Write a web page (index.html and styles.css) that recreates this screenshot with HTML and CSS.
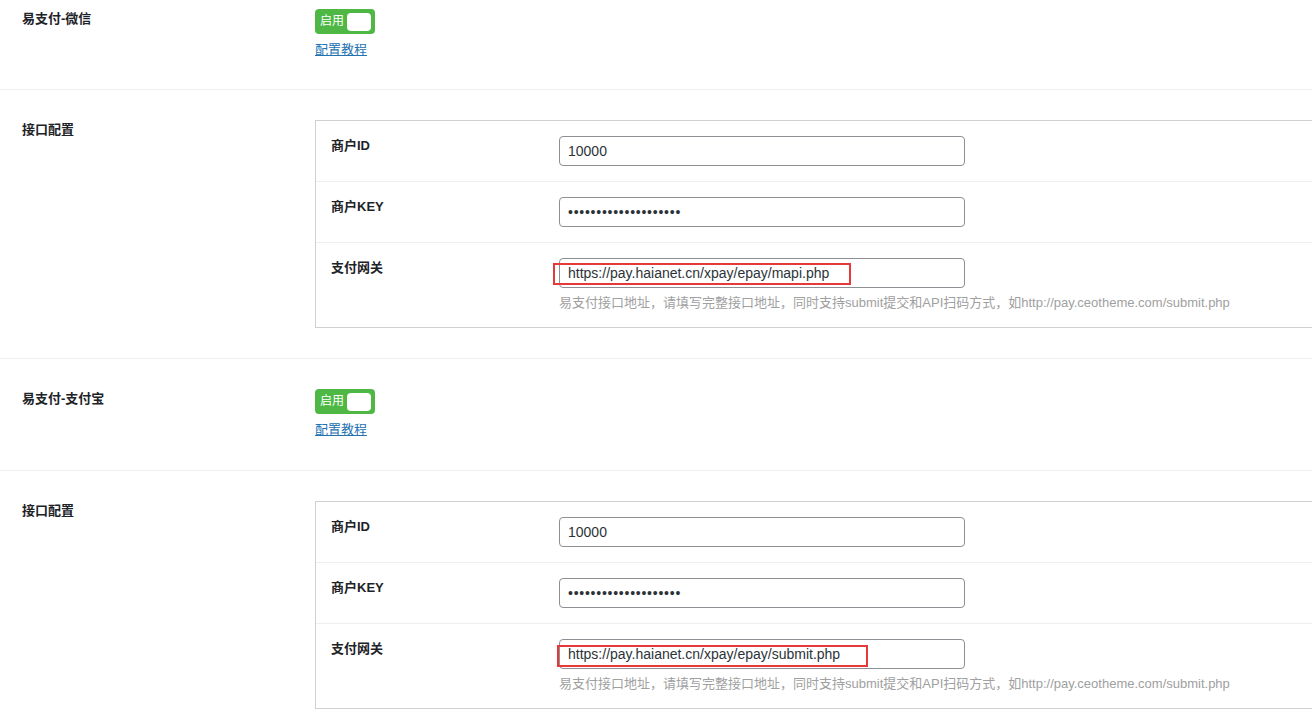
FILE: index.html
```html
<html lang="zh-CN">
  <head>
    <meta charset="UTF-8" />
    <meta name="viewport" content="width=device-width, initial-scale=1.0" />
    <title>易支付设置</title>
    <link rel="stylesheet" href="styles.css">
  </head>
  <body>
    <div class="field first">
      <div class="field-title">易支付-微信</div>
      <div class="field-body">
        <span class="switch"><span class="switch-text">启用</span><span class="knob"></span></span>
        <div class="help"><a href="#">配置教程</a></div>
      </div>
    </div>

    <div class="field">
      <div class="field-title">接口配置</div>
      <div class="field-body">
        <div class="box">
          <div class="row">
            <div class="row-title">商户ID</div>
            <div class="row-body"><input class="text" type="text" value="10000" /></div>
          </div>
          <div class="row">
            <div class="row-title">商户KEY</div>
            <div class="row-body"><input class="text pw" type="password" value="12345678901234567890" /></div>
          </div>
          <div class="row">
            <div class="row-title">支付网关</div>
            <div class="row-body">
              <div class="wrap">
                <input class="text" type="text" value="https://pay.haianet.cn/xpay/epay/mapi.php" />
                <span class="mark mark-a"></span>
              </div>
              <div class="desc">易支付接口地址，请填写完整接口地址，同时支持submit提交和API扫码方式，如http://pay.ceotheme.com/submit.php</div>
            </div>
          </div>
        </div>
      </div>
    </div>

    <div class="field">
      <div class="field-title">易支付-支付宝</div>
      <div class="field-body">
        <span class="switch"><span class="switch-text">启用</span><span class="knob"></span></span>
        <div class="help"><a href="#">配置教程</a></div>
      </div>
    </div>

    <div class="field">
      <div class="field-title">接口配置</div>
      <div class="field-body">
        <div class="box">
          <div class="row">
            <div class="row-title">商户ID</div>
            <div class="row-body"><input class="text" type="text" value="10000" /></div>
          </div>
          <div class="row">
            <div class="row-title">商户KEY</div>
            <div class="row-body"><input class="text pw" type="password" value="12345678901234567890" /></div>
          </div>
          <div class="row">
            <div class="row-title">支付网关</div>
            <div class="row-body">
              <div class="wrap">
                <input class="text" type="text" value="https://pay.haianet.cn/xpay/epay/submit.php" />
                <span class="mark mark-b"></span>
              </div>
              <div class="desc">易支付接口地址，请填写完整接口地址，同时支持submit提交和API扫码方式，如http://pay.ceotheme.com/submit.php</div>
            </div>
          </div>
        </div>
      </div>
    </div>
  </body>
</html>
```

FILE: styles.css
```css
html,
body {
  margin: 0;
  overflow: hidden;
  background: #fff;
}
body {
  font-family: "Liberation Sans", "Noto Sans CJK SC", sans-serif;
  font-size: 13px;
  color: #1d2327;
}
.field {
  display: flex;
  padding: 30px 0 30px 0;
  border-bottom: 1px solid #eeeeee;
}
.field.first {
  padding-top: 9px;
  padding-bottom: 29px;
}
.field-title {
  width: 315px;
  flex: none;
  box-sizing: border-box;
  padding-left: 22px;
  font-weight: bold;
  line-height: 20px;
}
.field-body {
  flex: 1;
}
.switch {
  display: inline-flex;
  align-items: center;
  width: 60px;
  height: 25px;
  box-sizing: border-box;
  padding: 0 4px 0 5px;
  background: #4fb845;
  border-radius: 4px;
  color: #fff;
  font-size: 12px;
}
.switch-text {
  flex: 1;
  line-height: 25px;
}
.knob {
  width: 24px;
  height: 18px;
  background: #fff;
  border-radius: 4px;
}
.help {
  margin-top: 6px;
  line-height: 20px;
}
.help a {
  color: #2271b1;
  text-decoration: underline;
}
.box {
  width: 1100px;
  border: 1px solid #d0d0d0;
}
.row {
  display: flex;
  padding: 15px;
  border-top: 1px solid #eeeeee;
}
.row:first-child {
  border-top: none;
}
.row-title {
  width: 228px;
  flex: none;
  font-weight: bold;
  line-height: 20px;
}
.row-body {
  flex: 1;
}
.wrap {
  position: relative;
  width: 406px;
}
.text {
  display: block;
  width: 406px;
  height: 30px;
  box-sizing: border-box;
  padding: 0 8px;
  border: 1px solid #8c8f94;
  border-radius: 4px;
  font-family: "Liberation Sans", "Noto Sans CJK SC", sans-serif;
  font-size: 14px;
  color: #2c3338;
  background: #fff;
}
.pw {
  letter-spacing: 0.75px;
}
.desc {
  margin-top: 6px;
  font-size: 13px;
  line-height: 18px;
  color: #a0a0a0;
}
.mark {
  position: absolute;
  border: 2px solid #e8393a;
  box-sizing: border-box;
}
.mark-a {
  left: -6px;
  top: 5px;
  width: 298px;
  height: 22px;
}
.mark-b {
  left: -2px;
  top: 6px;
  width: 311px;
  height: 22px;
}
```
